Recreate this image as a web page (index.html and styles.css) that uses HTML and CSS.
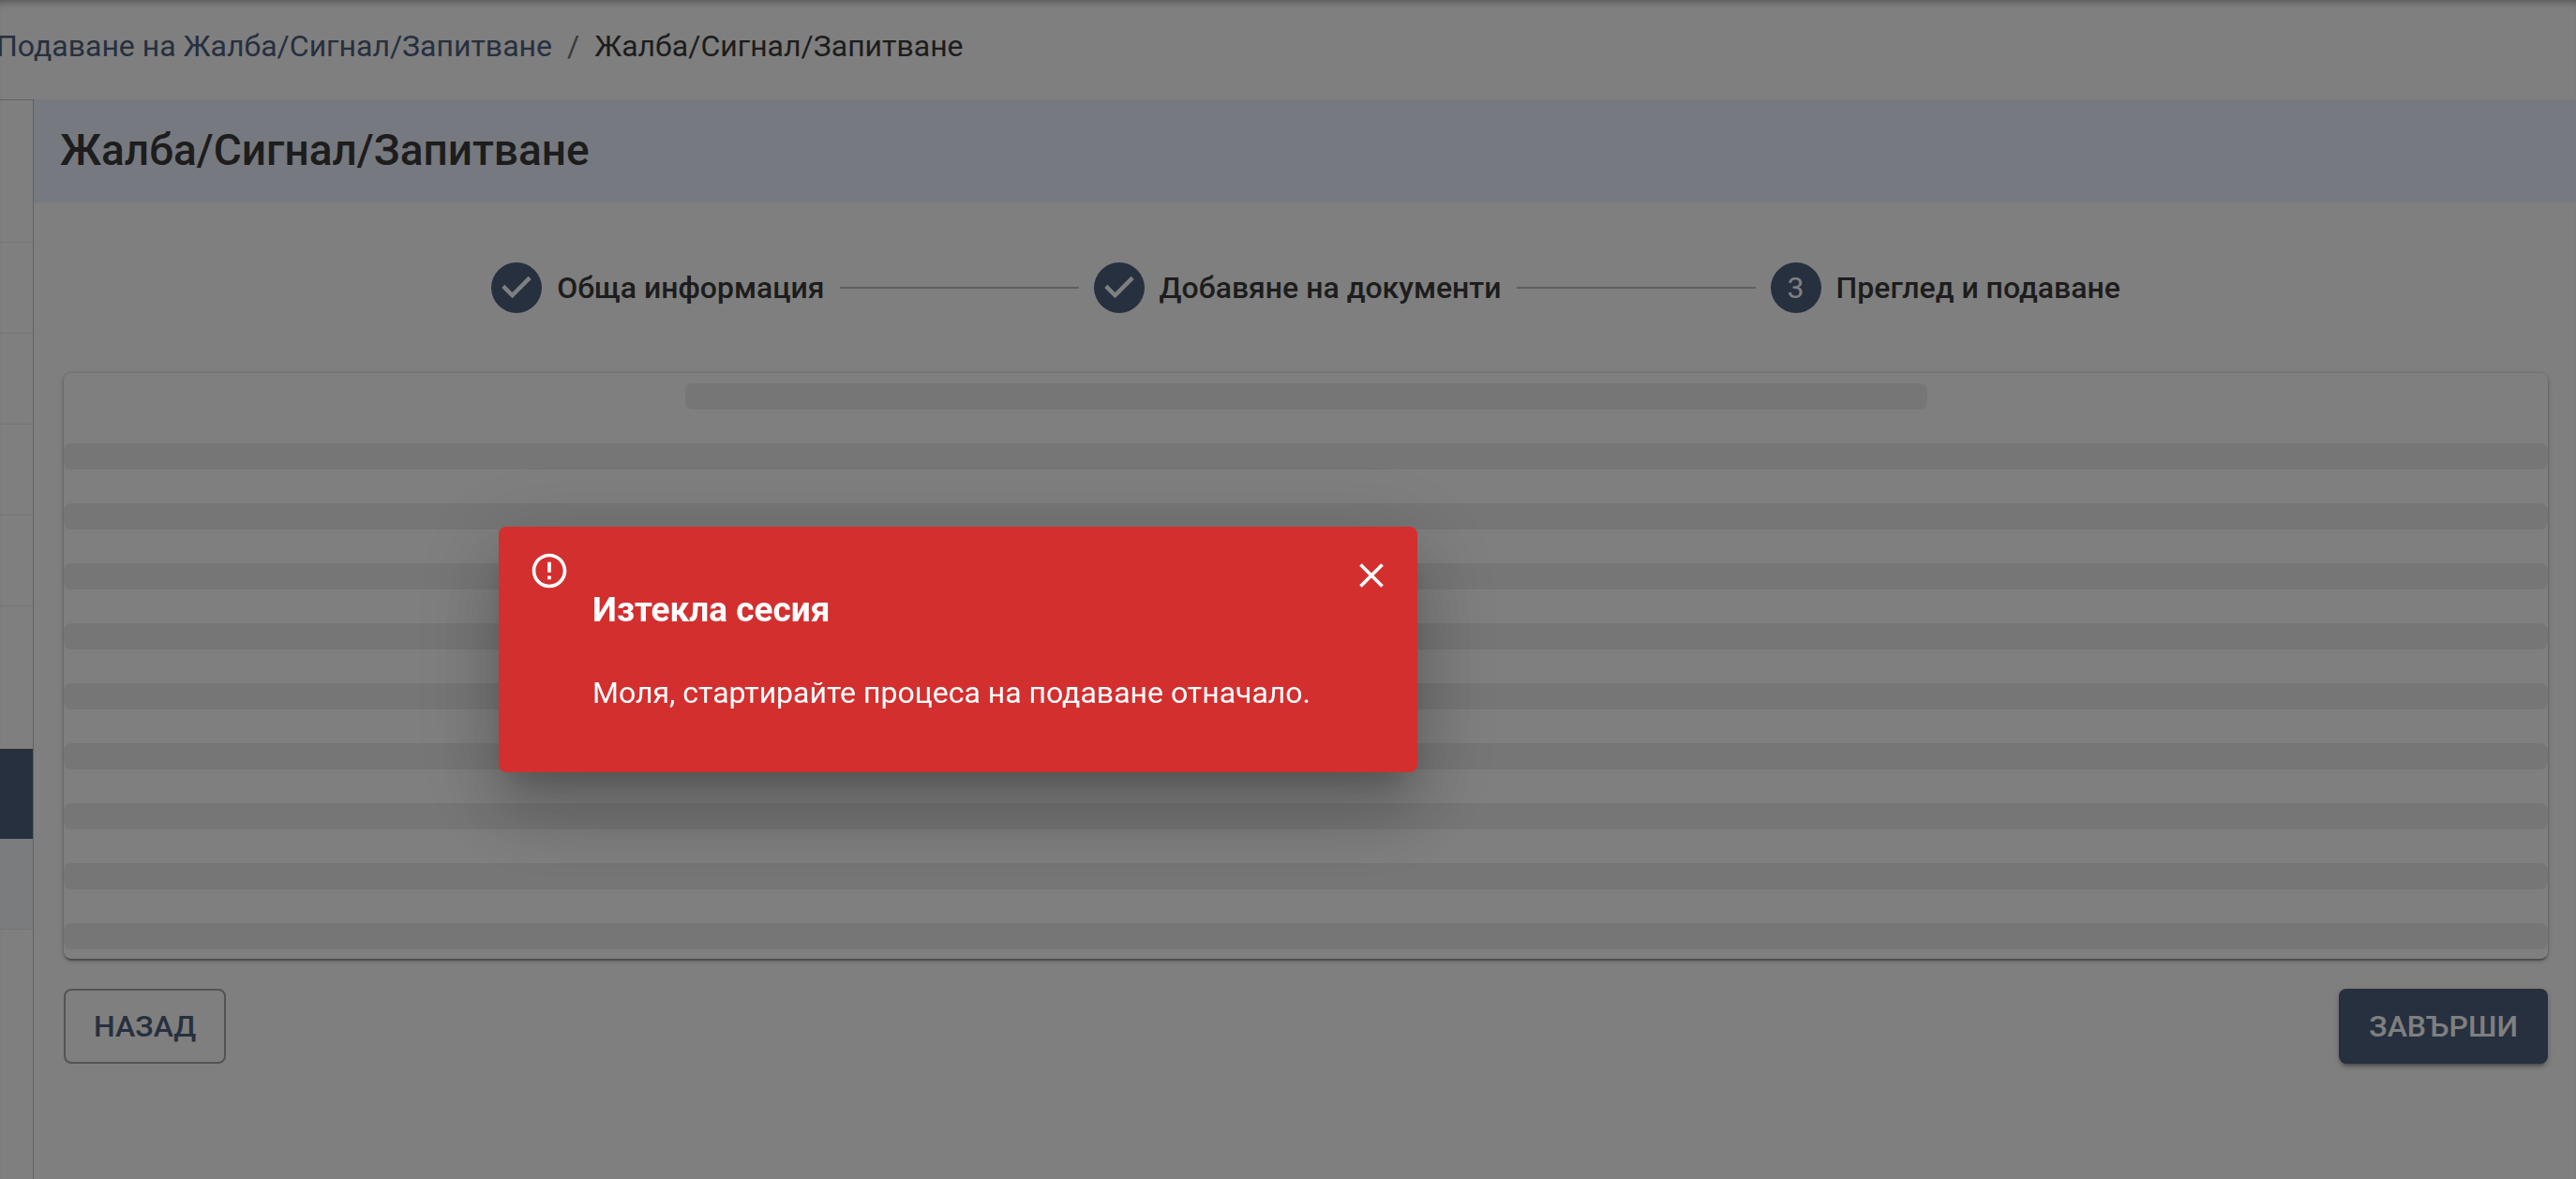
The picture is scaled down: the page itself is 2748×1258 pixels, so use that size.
FILE: index.html
```html
<!DOCTYPE html>
<html lang="bg">
<head>
<meta charset="utf-8">
<meta name="viewport" content="width=device-width, initial-scale=1">
<title>Жалба/Сигнал/Запитване</title>
<link rel="stylesheet" href="styles.css">
</head>
<body>
<div class="page">
  <nav class="breadcrumbs">
    <a href="#">Подаване на Жалба/Сигнал/Запитване</a>
    <span class="separator">/</span>
    <span class="current">Жалба/Сигнал/Запитване</span>
  </nav>
  <div class="body">
    <aside class="sidebar">
      <div class="side-item tall"></div>
      <div class="side-item"></div>
      <div class="side-item"></div>
      <div class="side-item"></div>
      <div class="side-item"></div>
      <div class="side-item tall plain"></div>
      <div class="side-item active"></div>
      <div class="side-item tinted"></div>
    </aside>
    <main class="main">
      <header class="title-band"><h1>Жалба/Сигнал/Запитване</h1></header>
      <ol class="stepper">
        <li class="step">
          <svg class="step-icon" viewBox="0 0 24 24"><path d="M12 0a12 12 0 1 0 0 24 12 12 0 0 0 0-24zm-2 17l-5-5 1.400-1.400 3.600 3.600 7.600-7.600L19 8l-9 9z"/></svg>
          <span>Обща информация</span>
        </li>
        <li class="connector"></li>
        <li class="step">
          <svg class="step-icon" viewBox="0 0 24 24"><path d="M12 0a12 12 0 1 0 0 24 12 12 0 0 0 0-24zm-2 17l-5-5 1.400-1.400 3.600 3.600 7.600-7.600L19 8l-9 9z"/></svg>
          <span>Добавяне на документи</span>
        </li>
        <li class="connector"></li>
        <li class="step">
          <span class="step-number">3</span>
          <span>Преглед и подаване</span>
        </li>
      </ol>
      <section class="card">
        <div class="bone half"></div>
        <div class="bone"></div>
        <div class="bone"></div>
        <div class="bone"></div>
        <div class="bone"></div>
        <div class="bone"></div>
        <div class="bone"></div>
        <div class="bone"></div>
        <div class="bone"></div>
        <div class="bone"></div>
      </section>
      <footer class="actions">
        <button class="btn outlined" type="button">НАЗАД</button>
        <button class="btn filled" type="button">ЗАВЪРШИ</button>
      </footer>
    </main>
  </div>
</div>
<div class="backdrop">
  <div class="dialog" role="alertdialog" aria-labelledby="dialog-title" aria-describedby="dialog-text">
    <svg class="alert-icon" viewBox="0 0 24 24"><path d="M11 15h2v2h-2zm0-8h2v6h-2zm.99-5C6.47 2 2 6.48 2 12s4.470 10 9.990 10C17.520 22 22 17.520 22 12S17.520 2 11.990 2zM12 20c-4.420 0-8-3.580-8-8s3.580-8 8-8 8 3.580 8 8-3.580 8-8 8z"/></svg>
    <div class="dialog-body">
      <h2 id="dialog-title">Изтекла сесия</h2>
      <p id="dialog-text">Моля, стартирайте процеса на подаване отначало.</p>
    </div>
    <button class="close" type="button" aria-label="Затвори">
      <svg viewBox="0 0 24 24"><path d="M19 6.410 17.590 5 12 10.590 6.410 5 5 6.410 10.590 12 5 17.590 6.410 19 12 13.410 17.590 19 19 17.590 13.410 12z"/></svg>
    </button>
  </div>
</div>
</body>
</html>
```
FILE: styles.css
```css
* { box-sizing: border-box; }

body {
  margin: 0;
  font-family: Roboto, "Noto Sans", sans-serif;
  font-size: 32px;
  line-height: 48px;
  color: #3a3a3a;
  background: #fff;
}

.page {
  display: flex;
  flex-direction: column;
  min-height: 100vh;
  overflow: hidden;
  box-shadow: inset 0 8px 8px -6px rgba(0, 0, 0, .35);
}

.breadcrumbs {
  display: flex;
  gap: 16px;
  margin-left: -4px;
  padding: 25px 0 33px;
  white-space: nowrap;
}
.breadcrumbs a { color: #4c607e; text-decoration: none; }
.separator { color: #757575; }

.body { display: flex; flex: 1; }

.sidebar {
  flex: none;
  width: 36px;
  border-right: 1px solid #c4c4c4;
  border-top: 1px solid #c4c4c4;
}
.side-item { height: 97px; border-bottom: 1px solid #ebebeb; }
.side-item.tall { height: 152px; }
.side-item.plain { border-bottom: 0; }
.side-item.active { height: 96px; background: #4c607e; border-bottom: 0; }
.side-item.tinted { background: #f5f8fd; }

.main { flex: 1; min-width: 0; }

.title-band {
  padding: 24px 28px 26px;
  background: #edf3ff;
}
h1 { margin: 0; font-size: 46px; line-height: 60px; font-weight: 500; }

.stepper {
  display: flex;
  align-items: center;
  justify-content: center;
  gap: 16px;
  margin: 0;
  padding: 64px 30px 64px 32px;
  list-style: none;
  font-weight: 500;
  white-space: nowrap;
}
.step { display: flex; align-items: center; gap: 16px; }
.step-icon { flex: none; width: 54px; height: 54px; fill: #4c607e; }
.step-number {
  display: grid;
  place-items: center;
  flex: none;
  width: 54px;
  height: 54px;
  border-radius: 50%;
  background: #4c607e;
  color: #fff;
  font-size: 32px;
  font-weight: 400;
}
.connector { flex: 0 1 255px; height: 2px; background: #bdbdbd; }

.card {
  display: flex;
  flex-direction: column;
  align-items: center;
  gap: 36px;
  margin: 0 30px 0 32px;
  padding: 11px 0 10px;
  border-radius: 8px;
  box-shadow: 0 4px 2px -2px rgba(0, 0, 0, .2), 0 2px 2px rgba(0, 0, 0, .14), 0 2px 6px rgba(0, 0, 0, .2), 0 0 3px rgba(0, 0, 0, .16);
}
.bone { width: 100%; height: 28px; border-radius: 8px; background: #ededed; }
.bone.half { width: 50%; }

.actions {
  display: flex;
  justify-content: space-between;
  padding: 32px 30px 32px 32px;
}
.btn {
  height: 80px;
  padding: 0 32px;
  border: 0;
  border-radius: 8px;
  font: 500 32px/48px Roboto, "Noto Sans", sans-serif;
}
.btn.outlined { border: 2px solid #a6a6a6; padding: 0 30px; background: none; color: #4c607e; }
.btn.filled {
  background: #4c607e;
  color: #fff;
  box-shadow: 0 6px 2px -4px rgba(0, 0, 0, .2), 0 4px 4px rgba(0, 0, 0, .14), 0 2px 10px rgba(0, 0, 0, .12);
}

.backdrop { position: fixed; inset: 0; background: rgba(0, 0, 0, .5); }
.dialog {
  position: absolute;
  top: 562px;
  left: 532px;
  display: flex;
  align-items: flex-start;
  padding: 25px 27px 25px 32px;
  border-radius: 8px;
  background: #d32f2f;
  color: #fff;
  box-shadow: 0 22px 30px -14px rgba(0, 0, 0, .2), 0 48px 76px 6px rgba(0, 0, 0, .14), 0 18px 92px 16px rgba(0, 0, 0, .12);
}
.alert-icon { flex: none; width: 44px; height: 44px; margin-right: 24px; fill: #fff; }
.dialog-body { padding: 40px 43px 36px 0; white-space: nowrap; }
h2 { margin: 0 0 40px; font-size: 37px; line-height: 48px; font-weight: 700; }
p { margin: 0; }
.close {
  display: grid;
  place-items: center;
  width: 44px;
  height: 44px;
  margin-top: 5px;
  padding: 0;
  border: 0;
  background: none;
}
.close svg { width: 44px; height: 44px; fill: #fff; }
```
